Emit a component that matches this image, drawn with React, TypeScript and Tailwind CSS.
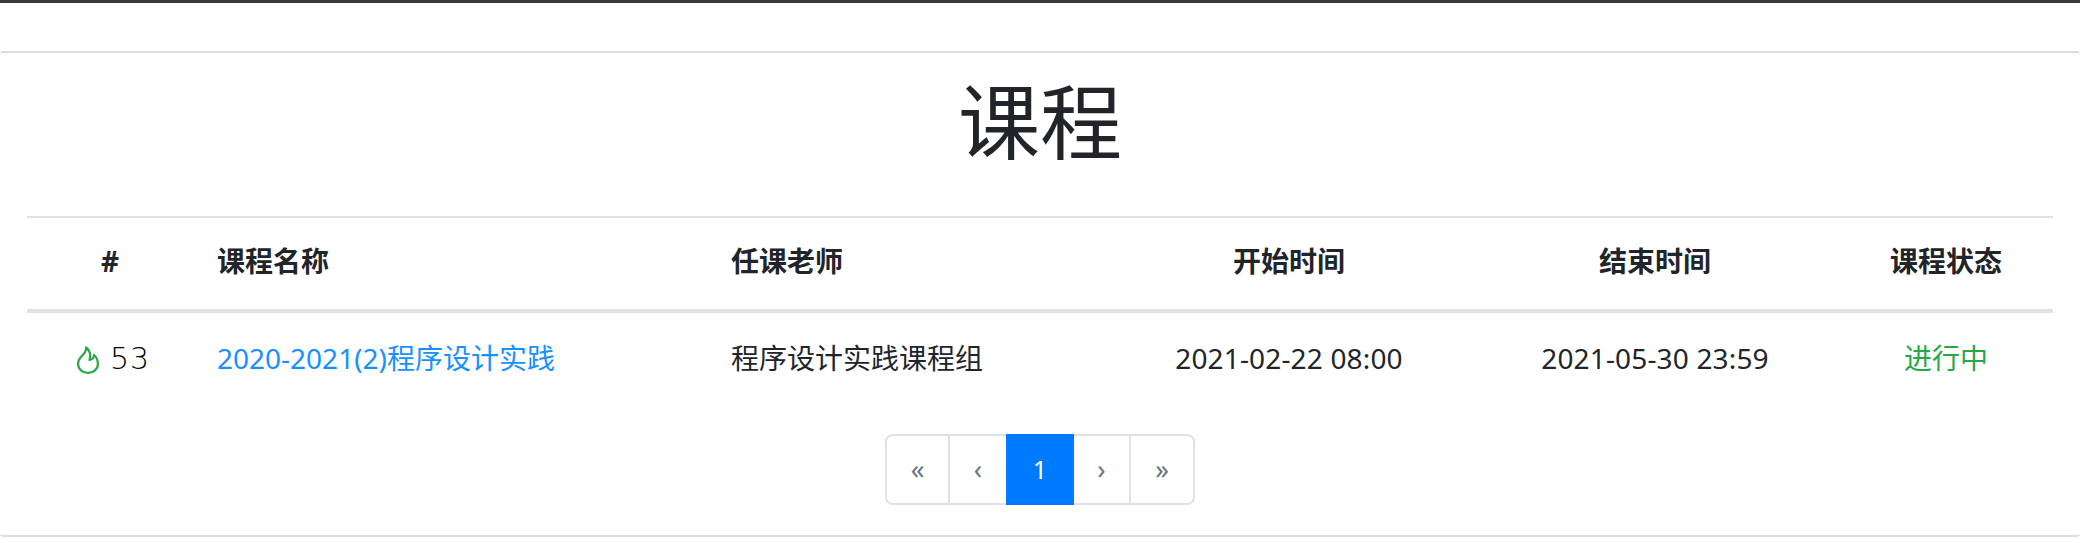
const pages = [
  { label: '«', width: 'w-[63px]' },
  { label: '‹', width: 'w-[56px]' },
  { label: '1', width: 'w-[68px]', active: true },
  { label: '›', width: 'w-[57px]' },
  { label: '»', width: 'w-[62px]' },
]

function FlameIcon() {
  return (
    <svg viewBox="0 0 22 28" className="w-[22px] h-[28px] mt-[4px]" fill="none" stroke="#28a745" strokeWidth="2.2" strokeLinejoin="round">
      <path d="M9 1.5 C10 5 7 8 4 11 C2 13 1.1 15 1.1 18 C1.1 23 5.5 26.9 11 26.9 C16.5 26.9 20.9 23 20.9 18 C20.9 14 19.5 11 17 9 C17 11.5 15.5 13.5 12.5 14 C14 9 13 4.5 9 1.5 Z" />
    </svg>
  )
}

export default function App() {
  return (
    <div className="h-[543px] bg-white text-[#212529] font-['Noto_Sans','Noto_Sans_CJK_SC',sans-serif] text-[28px] overflow-hidden">
      {/* 顶部导航条 */}
      <div className="h-[51px] border-t-[3px] border-[#343a40]" />

      {/* 课程卡片 */}
      <div className="border-y-2 border-[#dddddd] rounded-[4px] h-[486px] px-[27px]">
        <h1 className="h-[163px] text-center text-[82px] leading-[112px] pt-[12px]">课程</h1>

        <table className="w-[2026px] table-fixed border-collapse">
          <colgroup>
            <col className="w-[166px]" />
            <col className="w-[514px]" />
            <col className="w-[400px]" />
            <col className="w-[364px]" />
            <col className="w-[368px]" />
            <col className="w-[214px]" />
          </colgroup>
          <thead>
            <tr className="h-[94px] border-t-2 border-b-[4px] border-[#dee2e6] font-bold">
              <th className="text-center pb-[5px]">#</th>
              <th className="text-left pl-6 pb-[5px]">课程名称</th>
              <th className="text-left pl-6 pb-[5px]">任课老师</th>
              <th className="text-center pb-[5px]">开始时间</th>
              <th className="text-center pb-[5px]">结束时间</th>
              <th className="text-center pb-[5px]">课程状态</th>
            </tr>
          </thead>
          <tbody>
            <tr className="h-[94px]">
              <td className="pb-[2px]">
                <div className="flex items-center justify-center gap-[11px] pl-[7px]">
                  <FlameIcon />
                  <span className="font-['DejaVu_Sans',sans-serif] font-extralight text-black text-[30px] tracking-[1px]">53</span>
                </div>
              </td>
              <td className="pl-6 pb-[2px] text-[#1890ff]">2020-2021(2)程序设计实践</td>
              <td className="pl-6 pb-[2px]">程序设计实践课程组</td>
              <td className="text-center pb-[2px] tracking-[0.16px]">2021-02-22 08:00</td>
              <td className="text-center pb-[2px] tracking-[0.16px]">2021-05-30 23:59</td>
              <td className="text-center pb-[2px] text-[#28a745]">进行中</td>
            </tr>
          </tbody>
        </table>

        {/* 分页 */}
        <div className="flex justify-center mt-[29px]">
          <div className="flex h-[71px] rounded-[8px] border-2 border-[#dee2e6] text-[#6c757d]">
            {pages.map((p, i) => (
              <div
                key={p.label}
                className={
                  p.active
                    ? `${p.width} -my-[2px] flex items-center justify-center bg-[#007bff] text-white text-[25px]`
                    : `${p.width} flex items-center justify-center text-[27px] ${i === 0 || i === 3 ? 'border-r-2 border-[#dee2e6]' : ''}`
                }
              >
                {p.label}
              </div>
            ))}
          </div>
        </div>
      </div>
    </div>
  )
}
